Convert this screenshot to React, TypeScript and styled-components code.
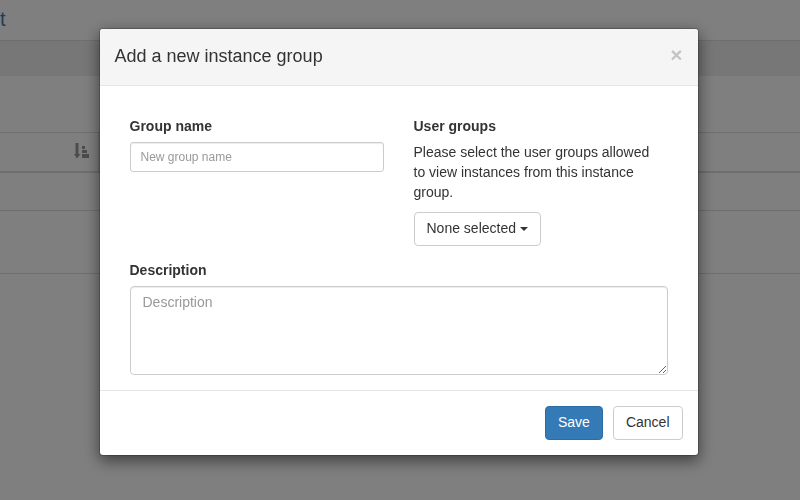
import React from "react";
import styled, { createGlobalStyle } from "styled-components";

const GlobalStyle = createGlobalStyle`
  html, body {
    margin: 0;
    padding: 0;
    height: 100%;
    overflow: hidden;
  }
  body {
    font-family: "Liberation Sans", Arial, sans-serif;
    font-size: 14px;
    line-height: 1.42857;
    color: #333;
    background: #fff;
  }
  * {
    box-sizing: border-box;
  }
`;

const SortIcon = () => (
  <svg width="16" height="16" viewBox="0 0 16 16">
    <path d="M1.5 0h3v11h2l-3.5 4.5L0 11h1.5z" fill="#999" />
    <rect x="8" y="3" width="3" height="3" fill="#999" />
    <rect x="8" y="7" width="5" height="3" fill="#999" />
    <rect x="8" y="11" width="7" height="4" fill="#999" />
  </svg>
);

const App = () => {
  return (
    <>
      <GlobalStyle />
      <Page>
        <TopBar>
          <PageLink>t</PageLink>
        </TopBar>
        <Band />
        <Spacer />
        <Table>
          <HeadRow>
            <HeadCell>
              <SortIcon />
            </HeadCell>
            <Cell />
          </HeadRow>
          <Row $height={38}>
            <Cell />
          </Row>
          <Row $height={63} />
        </Table>
      </Page>

      <Backdrop />
      <Overlay>
        <Dialog>
          <Header>
            <Title>Add a new instance group</Title>
            <Close type="button">×</Close>
          </Header>
          <Body>
            <Columns>
              <Group>
                <Label htmlFor="name">Group name</Label>
                <SmallInput id="name" placeholder="New group name" />
              </Group>
              <Group>
                <Label>User groups</Label>
                <Help>
                  Please select the user groups allowed
                  <br />
                  to view instances from this instance group.
                </Help>
                <Button type="button">
                  None selected <Caret />
                </Button>
              </Group>
            </Columns>
            <Group>
              <Label htmlFor="desc">Description</Label>
              <TextArea id="desc" placeholder="Description" />
            </Group>
          </Body>
          <Footer>
            <Button type="button" $primary>
              Save
            </Button>
            <Button type="button">Cancel</Button>
          </Footer>
        </Dialog>
      </Overlay>
    </>
  );
};

const Page = styled.div`
  width: 800px;
  height: 500px;
  background: #fff;
`;

const TopBar = styled.div`
  height: 41px;
  border-bottom: 1px solid #ddd;
  display: flex;
  align-items: center;
`;

const PageLink = styled.a`
  color: #337ab7;
  font-size: 20px;
  line-height: 1;
  margin-top: -2px;
`;

const Band = styled.div`
  height: 35px;
  background: #eee;
`;

const Spacer = styled.div`
  height: 56px;
`;

const Table = styled.div`
  border-top: 1px solid #ddd;
`;

const HeadRow = styled.div`
  height: 40px;
  border-bottom: 2px solid #ddd;
  display: flex;
`;

const HeadCell = styled.div`
  width: 99px;
  border-right: 1px solid #ddd;
  display: flex;
  align-items: center;
  justify-content: flex-end;
  padding-right: 8px;
  padding-bottom: 2px;
`;

const Cell = styled.div`
  flex: 1;
`;

const Row = styled.div<{ $height: number }>`
  height: ${(p) => p.$height}px;
  border-bottom: 1px solid #ddd;
  display: flex;
`;

const Backdrop = styled.div`
  position: fixed;
  inset: 0;
  background: rgba(0, 0, 0, 0.5);
`;

const Overlay = styled.div`
  position: fixed;
  inset: 0;
  display: flex;
  justify-content: center;
  align-items: flex-start;
  padding-top: 28px;
`;

const Dialog = styled.div`
  width: 600px;
  margin-left: -3px;
  background: #fff;
  border: 1px solid rgba(0, 0, 0, 0.2);
  border-radius: 4px;
  box-shadow: 0 5px 15px rgba(0, 0, 0, 0.5);
  background-clip: padding-box;
  overflow: hidden;
`;

const Header = styled.div`
  display: flex;
  align-items: center;
  justify-content: space-between;
  padding: 15px;
  background: #f5f5f5;
  border-bottom: 1px solid #e5e5e5;
`;

const Title = styled.h4`
  margin: 0;
  font-size: 18px;
  font-weight: 500;
  line-height: 1.42857;
  color: #333;
`;

const Close = styled.button`
  border: 0;
  background: transparent;
  padding: 0;
  margin-top: -4px;
  font-family: inherit;
  font-size: 21px;
  font-weight: bold;
  line-height: 1;
  color: #000;
  opacity: 0.2;
  cursor: pointer;
`;

const Body = styled.div`
  padding: 31px 30px 0;
`;

const Columns = styled.div`
  display: grid;
  grid-template-columns: 1fr 1fr;
  column-gap: 30px;
`;

const Group = styled.div`
  display: flex;
  flex-direction: column;
  align-items: flex-start;
  margin-bottom: 15px;
`;

const Label = styled.label`
  font-weight: bold;
  margin-bottom: 5px;
`;

const SmallInput = styled.input`
  width: 100%;
  height: 30px;
  padding: 5px 10px;
  font-family: inherit;
  font-size: 12px;
  line-height: 1.5;
  color: #555;
  border: 1px solid #ccc;
  border-radius: 3px;
  box-shadow: inset 0 1px 1px rgba(0, 0, 0, 0.075);
  outline: none;

  &::placeholder {
    color: #999;
  }
`;

const Help = styled.p`
  margin: 0 0 10px;
  color: #333;
  line-height: 20px;
`;

const TextArea = styled.textarea`
  width: 100%;
  height: 89px;
  padding: 6px 12px;
  font-family: inherit;
  font-size: 14px;
  line-height: 1.42857;
  color: #555;
  border: 1px solid #ccc;
  border-radius: 4px;
  box-shadow: inset 0 1px 1px rgba(0, 0, 0, 0.075);
  resize: vertical;
  outline: none;

  &::placeholder {
    color: #999;
  }
`;

const Button = styled.button<{ $primary?: boolean }>`
  display: inline-flex;
  align-items: center;
  height: 34px;
  padding: 6px 12px;
  font-family: inherit;
  font-size: 14px;
  line-height: 1.42857;
  border-radius: 4px;
  border: 1px solid ${(p) => (p.$primary ? "#2e6da4" : "#ccc")};
  background: ${(p) => (p.$primary ? "#337ab7" : "#fff")};
  color: ${(p) => (p.$primary ? "#fff" : "#333")};
  cursor: pointer;
`;

const Caret = styled.span`
  display: inline-block;
  width: 0;
  height: 0;
  margin-left: 4px;
  border-top: 4px solid #333;
  border-left: 4px solid transparent;
  border-right: 4px solid transparent;
`;

const Footer = styled.div`
  display: flex;
  justify-content: flex-end;
  gap: 10px;
  padding: 15px;
  border-top: 1px solid #e5e5e5;
`;

export default App;
